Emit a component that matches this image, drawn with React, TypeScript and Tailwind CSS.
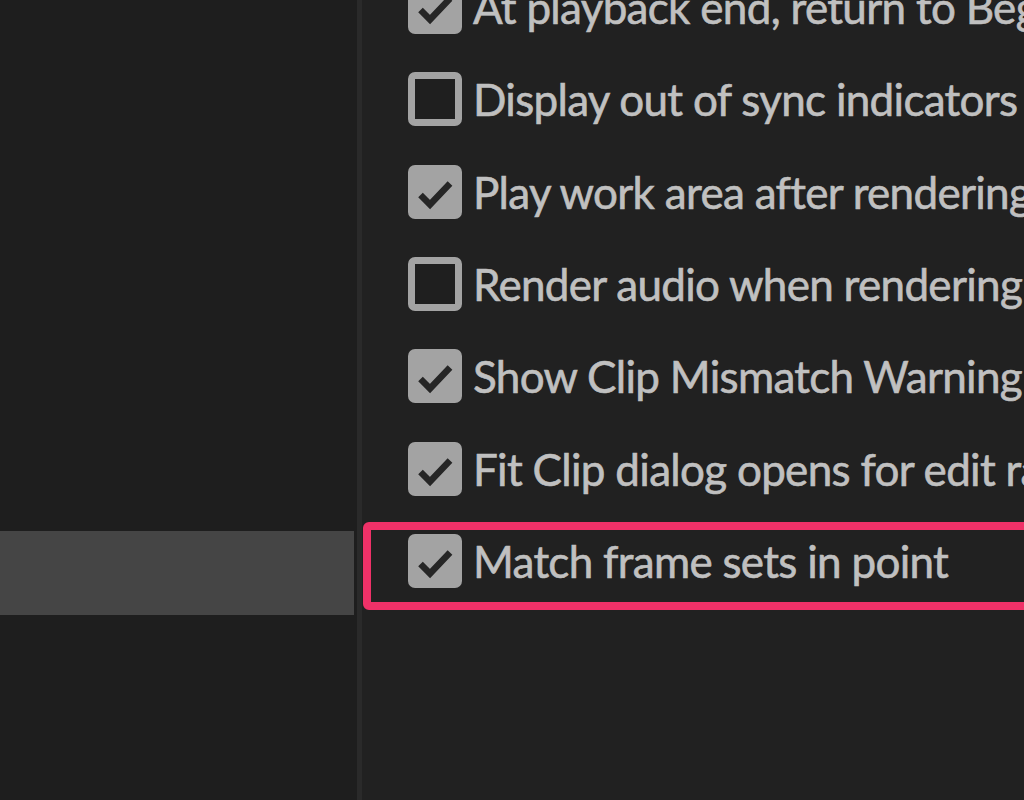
import React from "react";

const rows: { label: string; checked: boolean }[] = [
  { label: "At playback end, return to Beginning when restarting playback", checked: true },
  { label: "Display out of sync indicators for unlinked clips", checked: false },
  { label: "Play work area after rendering previews", checked: true },
  { label: "Render audio when rendering video", checked: false },
  { label: "Show Clip Mismatch Warning dialog", checked: true },
  { label: "Fit Clip dialog opens for edit range mismatches", checked: true },
  { label: "Match frame sets in point", checked: true },
];

function Box({ checked }: { checked: boolean }) {
  if (!checked) {
    return (
      <div className="w-[54px] h-[54px] shrink-0 rounded-[7px] border-[7px] border-[#a3a3a3] bg-[#1f1f1f]" />
    );
  }
  return (
    <div className="w-[54px] h-[54px] shrink-0 rounded-[7px] bg-[#a3a3a3]">
      <svg width="54" height="54" viewBox="0 0 54 54">
        <polyline
          points="12.5,30 22,39.5 42,18.5"
          fill="none"
          stroke="#262626"
          strokeWidth="6.5"
          strokeLinecap="butt"
          strokeLinejoin="miter"
        />
      </svg>
    </div>
  );
}

export default function App() {
  return (
    <div
      className="w-[1024px] h-[800px] flex overflow-hidden bg-[#212121]"
      style={{ fontFamily: "Lato, 'Open Sans', sans-serif" }}
    >
      <div className="w-[357px] shrink-0 h-full bg-[#1e1e1e] flex flex-col">
        <div className="mt-[531px] h-[84px] w-[354px] bg-[#454545]" />
      </div>
      <div className="w-[5px] shrink-0 h-full bg-[#2a2a2a]" />
      <div className="flex-1 h-full relative overflow-hidden">
        <div className="flex flex-col mt-[-39px]">
          {rows.map((r, i) => (
            <div key={i} className="relative h-[92.33px] flex items-center pl-[46px] gap-[11px] whitespace-nowrap">
              {i === 6 && (
                <div className="absolute left-[1px] top-[7px] h-[88px] w-[700px] rounded-[6px] border-[8px] border-[#ef3168]" />
              )}
              <Box checked={r.checked} />
              <span className="text-[44px] leading-none text-[#c0c0c0] tracking-[-0.7px] [-webkit-text-stroke:0.6px_#c0c0c0]">
                {r.label}
              </span>
            </div>
          ))}
        </div>
      </div>
    </div>
  );
}
